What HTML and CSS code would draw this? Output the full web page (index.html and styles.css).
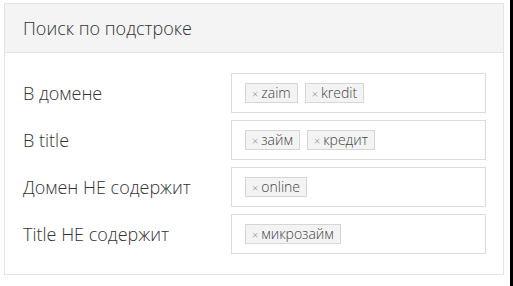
FILE: index.html
```html
<!DOCTYPE html>
<html lang="ru">
<head>
    <meta charset="UTF-8">
    <title>Поиск по подстроке</title>
    <link rel="stylesheet" href="styles.css">
</head>
<body>
    <div class="page">
        <div class="panel">
            <div class="panel-heading">Поиск по подстроке</div>
            <!-- filter rows -->
            <div class="panel-body">
                <label class="row-label">В домене</label>
                <div class="tags-input">
                    <span class="tag"><span class="tag-x">×</span>zaim</span>
                    <span class="tag"><span class="tag-x">×</span>kredit</span>
                </div>

                <label class="row-label">В title</label>
                <div class="tags-input">
                    <span class="tag"><span class="tag-x">×</span>займ</span>
                    <span class="tag"><span class="tag-x">×</span>кредит</span>
                </div>

                <label class="row-label">Домен НЕ содержит</label>
                <div class="tags-input">
                    <span class="tag"><span class="tag-x">×</span>online</span>
                </div>

                <label class="row-label">Title НЕ содержит</label>
                <div class="tags-input">
                    <span class="tag"><span class="tag-x">×</span>микрозайм</span>
                </div>
            </div>
        </div>
    </div>
    <div class="edge"></div>
</body>
</html>
```

FILE: styles.css
```css
html, body {
    height: 100%;
}
body {
    font-family: "Open Sans", sans-serif;
    margin: 0;
    padding: 0;
    background-color: #fff;
    color: #333;
    display: flex;
}
.page {
    flex: 1;
    padding: 3px 6px 0 4px;
}
.edge {
    width: 3px;
    background-color: #000;
}
.panel {
    border: 1px solid #e4e4e4;
}
.panel-heading {
    height: 48px;
    line-height: 48px;
    padding: 0 18px;
    background-color: #f4f4f4;
    border-bottom: 1px solid #e4e4e4;
    font-size: 18px;
    font-weight: 300;
}
.panel-body {
    display: grid;
    grid-template-columns: 208px 1fr;
    row-gap: 7px;
    align-items: center;
    padding: 20px 17px 20px 18px;
}
.row-label {
    font-size: 18px;
    font-weight: 300;
}
.tags-input {
    height: 38px;
    border: 1px solid #dcdcdc;
    display: flex;
    align-items: center;
    gap: 7px;
    padding: 0 13px;
}
.tag {
    height: 18px;
    line-height: 18px;
    padding: 0 6px;
    border: 1px solid #d6d6d6;
    background-color: #f3f3f3;
    font-size: 14px;
    font-weight: 300;
    color: #444;
}
.tag-x {
    font-size: 11px;
    color: #888;
    margin-right: 3px;
}
```
